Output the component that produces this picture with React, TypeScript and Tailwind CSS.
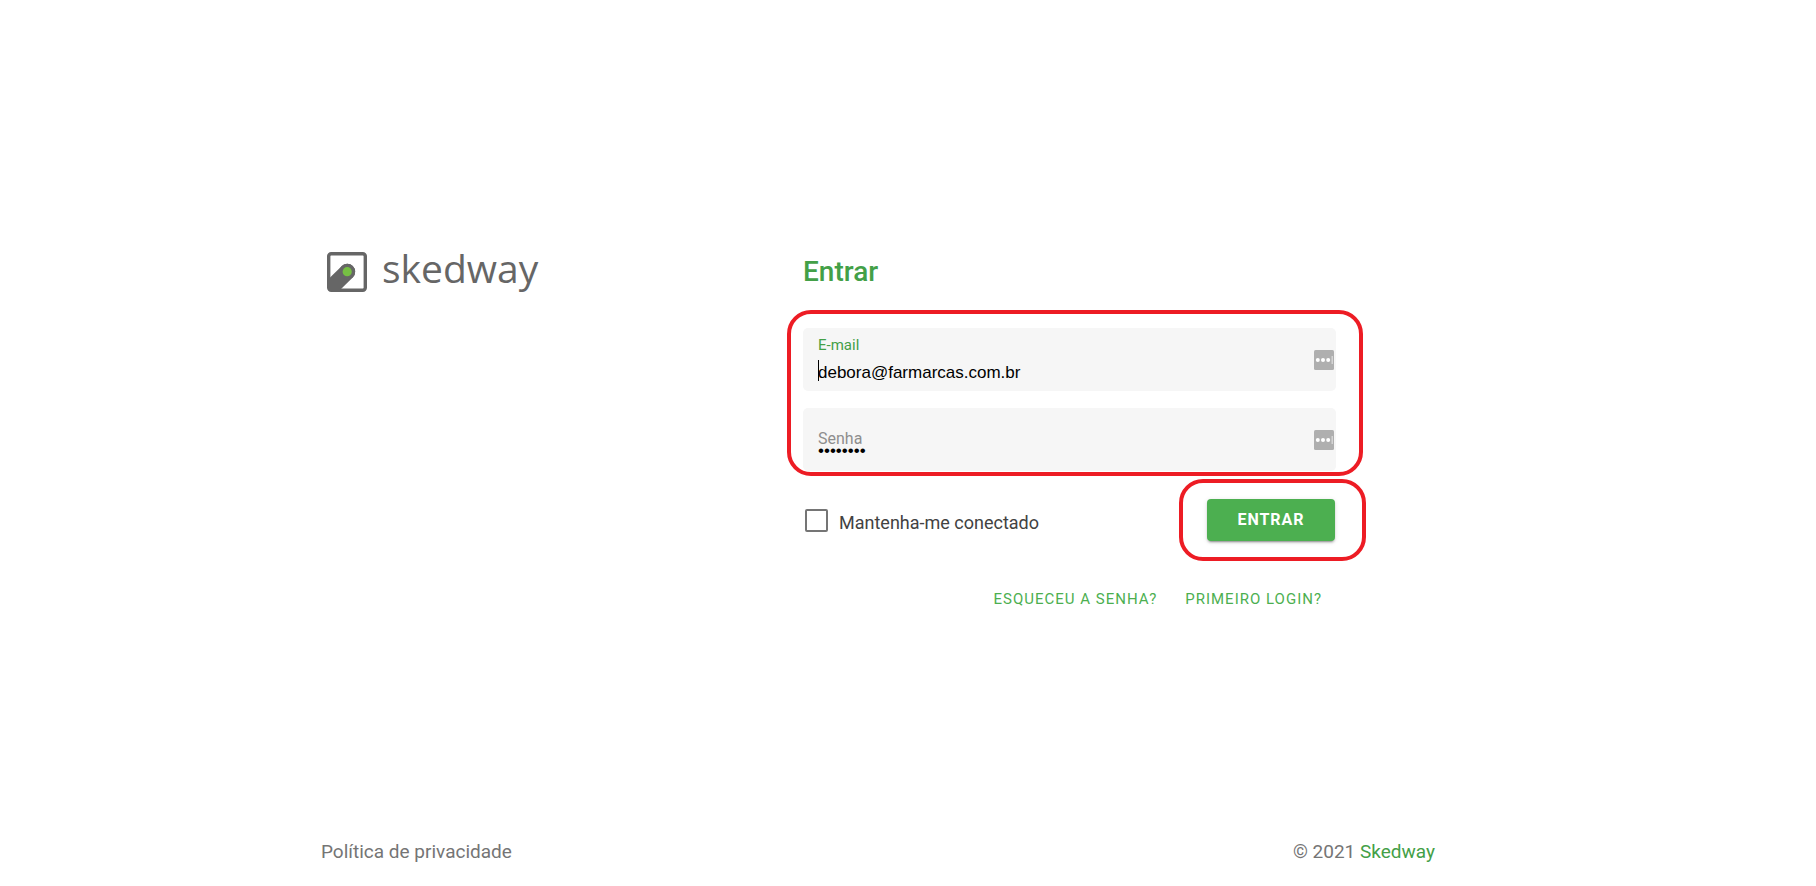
import React, { useState } from "react";

// Иконка менеджера паролей внутри поля
function KeyIcon() {
  return (
    <svg width="20" height="20" viewBox="0 0 20 20" aria-hidden="true">
      <rect width="20" height="20" rx="1.5" fill="#afafaf" />
      <circle cx="3.8" cy="10" r="2" fill="#fff" />
      <circle cx="9" cy="10" r="2" fill="#fff" />
      <circle cx="14.2" cy="10" r="2" fill="#fff" />
      <path d="M18.2 6v8" stroke="#dedede" strokeWidth="1.2" />
    </svg>
  );
}

function Logo() {
  return (
    <div className="flex items-start gap-[15px] pl-1.5 text-[#666666]">
      <svg width="40" height="40" viewBox="0 0 40 40" aria-hidden="true">
        <rect
          x="1.7"
          y="1.7"
          width="36.6"
          height="36.6"
          rx="2.5"
          fill="none"
          stroke="#666666"
          strokeWidth="3.4"
        />
        <path
          d="M2 26.5L14.6 14.2a7.9 7.9 0 0 1 11.4 11L13.5 37.5H2Z"
          fill="#666666"
        />
        <circle cx="20.2" cy="19.7" r="7.9" fill="#666666" />
        <circle cx="20.2" cy="19.7" r="4.6" fill="#76c043" />
      </svg>
      <span className="font-['Open_Sans',sans-serif] text-[39px] leading-8">
        skedway
      </span>
    </div>
  );
}

export default function App() {
  const [email, setEmail] = useState<string>("debora@farmarcas.com.br");
  const [senha, setSenha] = useState<string>("12345678");
  const [keep, setKeep] = useState<boolean>(false);

  return (
    <div className="flex min-h-screen flex-col bg-white pr-[60px] font-['Roboto',sans-serif]">
      <main className="mx-auto flex w-full max-w-[1114px] flex-1 items-start pt-[252px]">
        <div className="w-[482px] shrink-0">
          <Logo />
        </div>

        <form
          className="w-full max-w-[533px]"
          onSubmit={(e) => e.preventDefault()}
        >
          <h1 className="text-[28px] leading-10 font-medium text-[#43a047]">
            Entrar
          </h1>

          {/* Поля */}
          <div className="relative mt-9 flex flex-col gap-[17px]">
            <div className="flex h-[63px] items-center rounded-[5px] bg-[#f6f6f6] pr-0.5 pl-[15px]">
              <div className="relative flex flex-1 flex-col">
                <label
                  htmlFor="email"
                  className="text-[15px] leading-5 text-[#43a047]"
                >
                  E-mail
                </label>
                <input
                  id="email"
                  type="text"
                  value={email}
                  onChange={(e) => setEmail(e.target.value)}
                  className="mt-1.5 h-6 w-full bg-transparent font-['Liberation_Sans',sans-serif] text-[17px] text-black outline-none"
                />
                <span className="absolute bottom-1 left-0 h-[21px] w-px bg-black" />
              </div>
              <KeyIcon />
            </div>

            <div className="flex h-[63px] items-center rounded-[5px] bg-[#f6f6f6] pr-0.5 pl-[15px]">
              <div className="flex flex-1 flex-col pt-1.5">
                <label
                  htmlFor="senha"
                  className="text-base leading-4 text-[#8e8e8e]"
                >
                  Senha
                </label>
                <input
                  id="senha"
                  type="password"
                  value={senha}
                  onChange={(e) => setSenha(e.target.value)}
                  className="h-2 w-full bg-transparent font-['Liberation_Sans',sans-serif] text-[17px] leading-4 text-black outline-none"
                />
              </div>
              <KeyIcon />
            </div>

            <span className="pointer-events-none absolute -top-[18px] -right-[27px] -bottom-[5px] -left-4 rounded-3xl border-4 border-[#ed1c24]" />
          </div>

          <div className="mt-7 flex items-center justify-between pr-px">
            <label className="flex items-center gap-[11px] pl-0.5 text-lg text-[#424242]">
              <input
                type="checkbox"
                checked={keep}
                onChange={(e) => setKeep(e.target.checked)}
                className="size-[23px] appearance-none rounded-[2px] border-2 border-[#757575] checked:bg-[#4caf50]"
              />
              <span className="pt-1.5">Mantenha-me conectado</span>
            </label>
            <div className="relative">
              <button
                type="submit"
                className="h-[42px] w-32 cursor-pointer rounded bg-[#4caf50] text-base font-bold tracking-[1px] text-white shadow-[0_3px_1px_-2px_rgba(0,0,0,0.2),0_2px_2px_0_rgba(0,0,0,0.14),0_1px_5px_0_rgba(0,0,0,0.12)]"
              >
                ENTRAR
              </button>
              <span className="pointer-events-none absolute -top-5 -right-[31px] -bottom-5 -left-7 rounded-3xl border-4 border-[#ed1c24]" />
            </div>
          </div>

          <div className="mt-11 flex justify-end gap-7 pr-3.5 text-[15px] leading-7 tracking-[1px] text-[#4caf50]">
            <a href="#senha">ESQUECEU A SENHA?</a>
            <a href="#login">PRIMEIRO LOGIN?</a>
          </div>
        </form>
      </main>

      <footer className="mx-auto flex w-full max-w-[1114px] items-center justify-between pb-5 text-[19px] leading-7 text-[#757575]">
        <a href="#privacidade">Política de privacidade</a>
        <span>
          © 2021{" "}
          <a href="#skedway" className="text-[#43a047]">
            Skedway
          </a>
        </span>
      </footer>
    </div>
  );
}
